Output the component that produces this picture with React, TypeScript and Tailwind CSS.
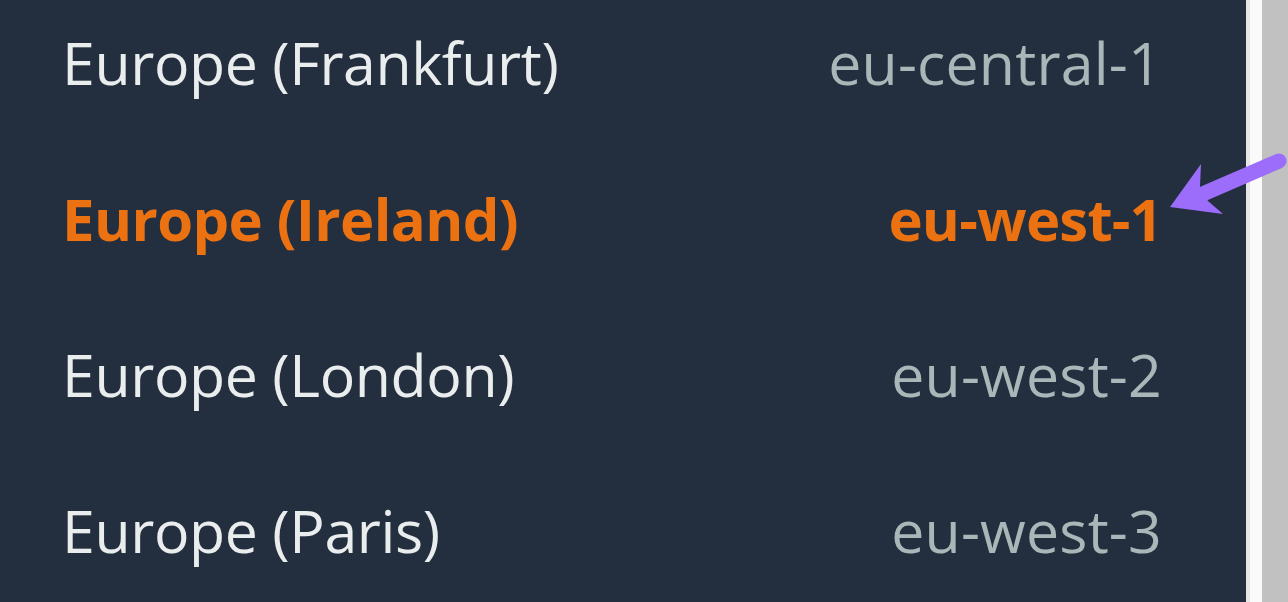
import React from "react";

type Region = { name: string; code: string; active?: boolean };

const REGIONS: Region[] = [
  { name: "Europe (Frankfurt)", code: "eu-central-1" },
  { name: "Europe (Ireland)", code: "eu-west-1", active: true },
  { name: "Europe (London)", code: "eu-west-2" },
  { name: "Europe (Paris)", code: "eu-west-3" },
];

function Arrow() {
  return (
    <svg
      className="absolute left-0 top-0 pointer-events-none"
      width="1288"
      height="602"
      viewBox="0 0 1288 602"
    >
      <line x1="1279" y1="161" x2="1205" y2="193" stroke="#9c6cfa" strokeWidth="15" strokeLinecap="round" />
      <path d="M1170 207 L1201 164 L1200 186 L1208 201 L1223 214 Z" fill="#9c6cfa" />
    </svg>
  );
}

export default function App() {
  return (
    <div
      className="relative flex h-[602px] w-[1288px] overflow-hidden bg-[#c1c1c1]"
      style={{ fontFamily: '"Open Sans", "Noto Sans", sans-serif' }}
    >
      {/* Region list */}
      <div className="w-[1246px] shrink-0 bg-[#232f3e]">
        <div className="-mt-[16px] flex flex-col">
          {REGIONS.map((r) => (
            <div
              key={r.code}
              className={
                "flex h-[156px] items-center justify-between pl-[62px] pr-[84px] " +
                (r.active
                  ? "text-[58px] font-bold tracking-[-0.6px] text-[#ec7211]"
                  : "text-[59px] text-[#eaeded]")
              }
            >
              <span className={r.active ? "" : "tracking-[-0.4px]"}>{r.name}</span>
              <span className={r.active ? "tracking-[-0.8px]" : "tracking-[0.2px] text-[#aab7b8]"}>{r.code}</span>
            </div>
          ))}
        </div>
      </div>
      {/* Scrollbar track */}
      <div className="w-[4px] shrink-0 bg-[#e6e6e6]" />
      <div className="w-[12px] shrink-0 bg-[#fafafa]" />
      <div className="flex-1 bg-[#c1c1c1]" />
      <Arrow />
    </div>
  );
}
